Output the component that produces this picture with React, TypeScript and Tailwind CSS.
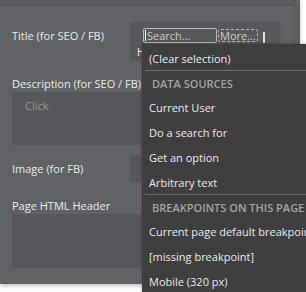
const items = [
  { t: "(Clear selection)", kind: "item" },
  { t: "DATA SOURCES", kind: "head", line: true },
  { t: "Current User", kind: "item" },
  { t: "Do a search for", kind: "item" },
  { t: "Get an option", kind: "item" },
  { t: "Arbitrary text", kind: "item" },
  { t: "BREAKPOINTS ON THIS PAGE", kind: "head", line: true },
  { t: "Current page default breakpoint", kind: "item" },
  { t: "[missing breakpoint]", kind: "item" },
  { t: "Mobile (320 px)", kind: "item" },
];

const App = () => {
  return (
    <div className="relative w-[306px] h-[292px] bg-white overflow-hidden font-['Open_Sans',sans-serif] text-[11px] text-[#e9e9e9]">
      <div className="w-[300px] h-[284px] bg-[#5e6366] flex flex-col shadow-[0_2px_4px_rgba(0,0,0,0.25)]">
        <div className="h-[8px] bg-[#585d60] border-b border-[#64696c]" />
        <div className="flex items-start mt-[14px] pl-[12px]">
          <div className="w-[118px] pt-[6px] leading-[15px]">Title (for SEO / FB)</div>
          <div className="w-[151px] h-[39px] bg-[#54595b] pl-[13px] pt-[6px]">
            <div className="flex items-center">
              <div className="w-[74px] h-[15px] border border-[#b5b8ba] rounded-[2px] flex items-center pl-[1px] text-[#c9cbcc] leading-[13px]">
                <span className="w-px h-[11px] bg-white mr-px" />
                Search...
              </div>
              <div className="ml-px h-[13px] px-[1px] border border-dashed border-[#b5b8ba] rounded-[3px] text-[#c9cbcc] leading-[11px]">
                More...
              </div>
              <span className="ml-[5px] w-[2px] h-[11px] bg-[#e0e0e0] mt-[3px]" />
            </div>
            <div className="-ml-[6px] mt-[2px] leading-[13px]">Header</div>
          </div>
        </div>
        <div className="pl-[12px] mt-[15px] leading-[15px]">Description (for SEO / FB)</div>
        <div className="ml-[12px] mt-[1px] w-[269px] h-[53px] bg-[#54595b] pl-[13px] pt-[6px]">
          <span className="text-[#8f9496] leading-[13px]">Click</span>
        </div>
        <div className="flex items-center mt-[10px] pl-[12px]">
          <div className="w-[118px] leading-[15px]">Image (for FB)</div>
          <div className="w-[151px] h-[27px] bg-[#54595b]" />
        </div>
        <div className="pl-[12px] mt-[16px] leading-[15px]">Page HTML Header</div>
        <div className="ml-[12px] mt-[1px] w-[269px] h-[54px] bg-[#54595b]" />
      </div>
      <div className="absolute right-[6px] top-0 w-[6px] h-[284px] bg-[#5a5f62] border-l border-[#53585b]" />
      <div className="absolute left-[142px] top-[44px] w-[170px] h-[260px] bg-[#3f3f3f] pt-[2px] shadow-[0_0_3px_rgba(0,0,0,0.3)]">
        {items.map((it) => (
          <div
            key={it.t}
            className={
              "h-[25px] leading-[25px] pl-[7px] whitespace-nowrap " +
              (it.line ? "border-t border-[#6b6b6b] ml-[3px] -mt-px " : "") +
              (it.kind === "head" ? "text-[#a3a3a3] font-semibold pl-[4px]" : "")
            }
          >
            {it.t}
          </div>
        ))}
      </div>
    </div>
  );
};

export default App;
